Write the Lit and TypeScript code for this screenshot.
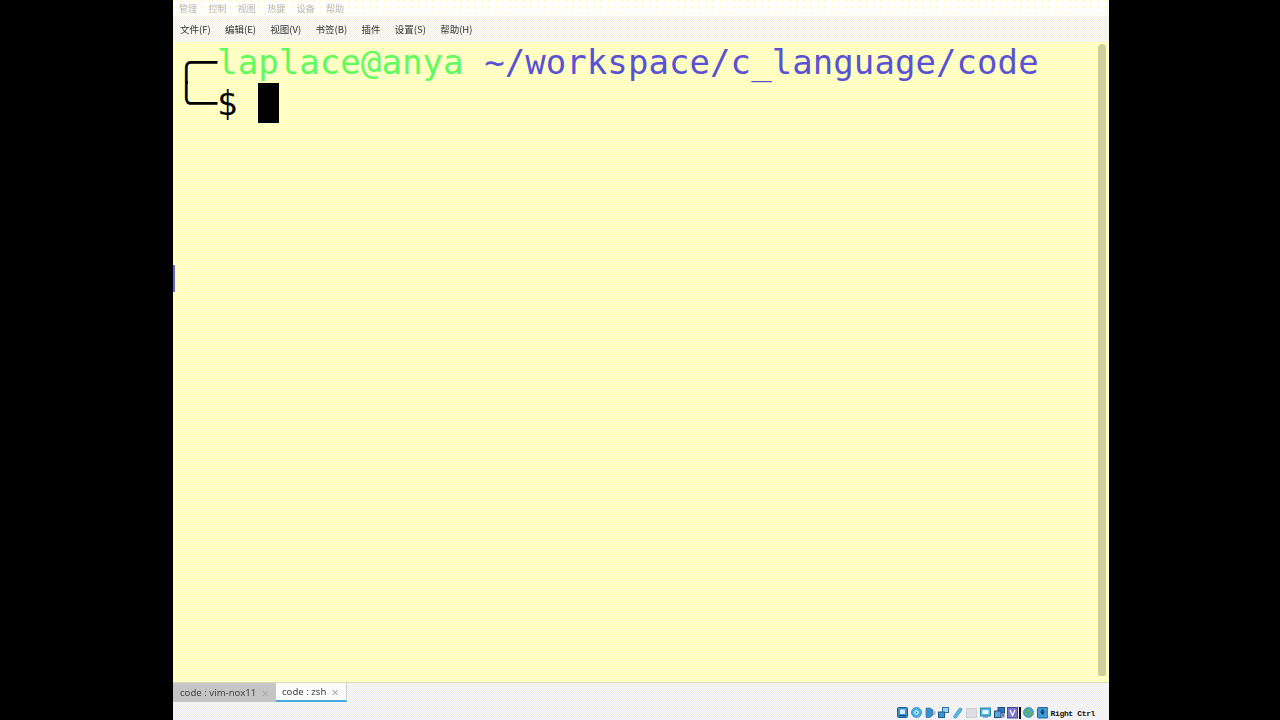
import { LitElement, html, css, svg } from "lit";
import { customElement } from "lit/decorators.js";

const icons = [
  svg`<rect x="0.5" y="0.5" width="10" height="10" rx="1" fill="#3c8fd0" stroke="#1d5f9a"/><rect x="3" y="2.5" width="5" height="4.5" fill="#d5eefa"/><rect x="2" y="8" width="7" height="1.2" fill="#0f4a80"/>`,
  svg`<circle cx="5.5" cy="5.5" r="5" fill="#45b4e0" stroke="#2f88bd" stroke-width="0.8"/><circle cx="5.5" cy="5.5" r="2.2" fill="#d8f2fb"/><circle cx="5.5" cy="5.5" r="0.9" fill="#2f88bd"/>`,
  svg`<path d="M1 1h4l3 2v5l-3 2.500H1z" fill="#3b8fcc" stroke="#22689f" stroke-width="0.6"/><path d="M8.500 3.500l2 1v3l-2 1z" fill="#b9b9b0"/>`,
  svg`<rect x="4.5" y="0.5" width="6" height="5" fill="#9fd2ee" stroke="#2f6f9f"/><rect x="0.5" y="5" width="6" height="5.5" fill="#3f93cf" stroke="#1f5c8e"/>`,
  svg`<path d="M1.500 9.500L7 1.500c1-1 3.500 0 3 1.500L4.500 10.500c-1 .8-3.500.3-3-1z" fill="#5fb6e8" stroke="#2f86bf" stroke-width="0.7"/>`,
  svg`<rect x="0.5" y="1.5" width="10" height="9" fill="#dedee2" stroke="#ccccd2"/>`,
  svg`<rect x="0.5" y="1" width="10" height="8" fill="#53b6dc" stroke="#2d85ad"/><rect x="2.5" y="3" width="6" height="4" fill="#e5f6fc"/><rect x="3" y="9.5" width="5" height="1" fill="#2d85ad"/>`,
  svg`<rect x="4" y="0.5" width="6.5" height="5.5" fill="#2f79b8" stroke="#1b4f82"/><rect x="0.5" y="4" width="6.5" height="6.5" fill="#5da3d6" stroke="#1b4f82"/><rect x="7.5" y="6.5" width="3" height="4" fill="#7b8796"/>`,
  svg`<rect x="0.5" y="0.5" width="10" height="10.5" fill="#7d78c8" stroke="#4a4596"/><path d="M3 3l2.500 5.500L8 3" fill="none" stroke="#fff" stroke-width="1.2"/>`,
];
const icons2 = [
  svg`<circle cx="5.5" cy="5.5" r="5" fill="#4aa8d8" stroke="#2b7ba8" stroke-width="0.7"/><path d="M2 3c2-1.500 3.500-1 4 .5S4.500 6 5 8s-2 1-3-1zM7 6c1.500-1 3-.5 3 .5S8.500 10 7.500 9.500z" fill="#62b648"/>`,
  svg`<rect x="0.5" y="0.5" width="10.5" height="10.5" rx="1" fill="#3f9ad6" stroke="#1f6aa5"/><path d="M3 4.500h5L5.500 8z" fill="#0b3a66"/><rect x="4.500" y="2.500" width="2" height="2" fill="#0b3a66"/>`,
];

@customElement("app-root")
export class AppRoot extends LitElement {
  static styles = css`
    :host {
      display: block;
      width: 1280px;
      height: 720px;
      background: #000;
      overflow: hidden;
    }
    .window {
      position: relative;
      margin-left: 173px;
      width: 936px;
      height: 720px;
      display: flex;
      flex-direction: column;
      font-family: "Noto Sans CJK SC", "Noto Sans", sans-serif;
    }
    .title {
      height: 16px;
      display: flex;
      align-items: center;
      gap: 11.4px;
      padding-left: 6px;
      font-size: 9px;
      color: #b4b4b0;
      background-color: #fefeff;
      background-image: radial-gradient(circle at 1px 1px, #ffffc0 1px, transparent 1px);
      background-size: 7px 6px;
      filter: blur(0.3px);
    }
    .menu {
      height: 26px;
      display: flex;
      align-items: center;
      gap: 14.3px;
      padding-left: 7px;
      font-size: 9.5px;
      color: #333;
      background-color: #f3f3ee;
      background-image: repeating-conic-gradient(#efeff0 0 25%, #fbfbec 0 50%);
      background-size: 2px 2px;
    }
    .menu span {
      filter: blur(0.25px);
    }
    .terminal {
      flex: 1;
      position: relative;
      padding: 0 0 0 3px;
      background-color: #ffffb4;
      background-image: repeating-conic-gradient(#ffffb0 0 25%, #ffffd8 0 50%);
      background-size: 2px 2px;
      font-family: "DejaVu Sans Mono", monospace;
      font-size: 34px;
      line-height: 40px;
      color: #000;
    }
    .line {
      height: 40px;
      white-space: pre;
      letter-spacing: 0.07px;
    }
    .first {
      margin-bottom: 1px;
    }
    .green {
      color: #5ffb5f;
    }
    .blue {
      color: #5a52d5;
    }
    .cursor {
      display: inline-block;
      width: 21px;
      height: 40px;
      background: #000;
      vertical-align: top;
    }
    .join {
      position: absolute;
      left: 12px;
      top: 39px;
      width: 3px;
      height: 3px;
      background: #000;
    }
    .scroll {
      position: absolute;
      left: 925px;
      top: 2px;
      bottom: 6px;
      width: 8px;
      border-radius: 4px 4px 2px 2px;
      background: #cfcf9c;
    }
    .blip {
      position: absolute;
      left: 0;
      top: 223px;
      width: 2px;
      height: 27px;
      background: #6e66c8;
    }
    .bottom {
      height: 38px;
      display: flex;
      flex-direction: column;
      background-color: #efeff6;
      background-image: repeating-conic-gradient(#ebebf6 0 25%, #fbfbf4 0 50%);
      background-size: 2px 2px;
      border-top: 1px solid #dcdcb4;
      box-sizing: border-box;
    }
    .tabs {
      height: 19px;
      display: flex;
      font-size: 9.6px;
      font-family: "Noto Sans", sans-serif;
      color: #444;
      white-space: nowrap;
    }
    .tab {
      display: flex;
      align-items: center;
      justify-content: space-between;
      padding: 0 7px;
      box-sizing: border-box;
      filter: blur(0.2px);
    }
    .tab.off {
      width: 103px;
      background: #c5c5c6;
    }
    .tab.on {
      width: 71px;
      padding-left: 6px;
      background: #fbfbfd;
      border-right: 1px solid #d0d0c0;
      border-bottom: 2px solid #46a9e0;
    }
    .x {
      color: #a8a8a8;
      font-size: 13px;
    }
    .status {
      flex: 1;
      display: flex;
      align-items: center;
      padding: 5px 0 2px 724px;
      gap: 2.8px;
    }
    .status svg {
      width: 11px;
      height: 12px;
      flex: none;
    }
    .bar {
      width: 2px;
      height: 12px;
      margin: 0 -1px 0 -2px;
      background: #000;
    }
    .key {
      font-family: "Liberation Mono", monospace;
      font-weight: bold;
      font-size: 8px;
      letter-spacing: -0.35px;
      color: #111;
    }
  `;

  private icon(c: unknown) {
    return html`<svg viewBox="0 0 11 12">${c}</svg>`;
  }

  render() {
    return html`
      <div class="window">
        <div class="title">
          <span>管理</span><span>控制</span><span>视图</span><span>热键</span><span>设备</span><span>帮助</span>
        </div>
        <div class="menu">
          <span>文件(F)</span><span>编辑(E)</span><span>视图(V)</span><span>书签(B)</span><span>插件</span><span>设置(S)</span><span>帮助(H)</span>
        </div>
        <div class="terminal">
          <div class="line first">╭─<span class="green">laplace@anya</span> <span class="blue">~/workspace/c_language/code</span></div>
          <div class="line">╰─$ <span class="cursor"></span></div>
          <div class="join"></div>
          <div class="scroll"></div>
          <div class="blip"></div>
        </div>
        <div class="bottom">
          <div class="tabs">
            <div class="tab off"><span>code : vim-nox11</span><span class="x">×</span></div>
            <div class="tab on"><span>code : zsh</span><span class="x">×</span></div>
          </div>
          <div class="status">
            ${icons.map((c) => this.icon(c))}
            <div class="bar"></div>
            ${icons2.map((c) => this.icon(c))}
            <span class="key">Right Ctrl</span>
          </div>
        </div>
      </div>
    `;
  }
}
